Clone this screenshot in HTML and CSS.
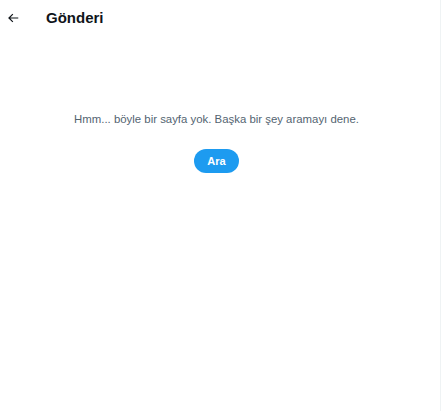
FILE: index.html
```html
<!DOCTYPE html>
<html lang="tr">
<head>
<meta charset="utf-8">
<link rel="stylesheet" href="styles.css">
</head>
<body>
<main class="column">
  <header class="topbar">
    <button class="back" aria-label="Geri">
      <svg viewBox="0 0 24 24" width="14" height="14"><path d="M7.414 13l5.043 5.04-1.414 1.42L3.586 12l7.457-7.46 1.414 1.42L7.414 11H21v2H7.414z" fill="#0f1419"/></svg>
    </button>
    <h1 class="title">Gönderi</h1>
  </header>
  <section class="empty">
    <p class="message">Hmm... böyle bir sayfa yok. Başka bir şey aramayı dene.</p>
    <button class="search-btn">Ara</button>
  </section>
</main>
</body>
</html>
```
FILE: styles.css
```css
html, body {
  margin: 0;
  padding: 0;
  background: #fff;
  height: 100%;
}
body {
  font-family: "Liberation Sans", Arial, sans-serif;
  color: #0f1419;
}
.column {
  width: 440px;
  min-height: 100%;
  border-right: 1px solid #eff3f4;
  box-sizing: content-box;
}
.topbar {
  display: flex;
  align-items: center;
  height: 35px;
  padding: 0 5px;
}
.back {
  width: 14px;
  height: 14px;
  padding: 0;
  margin: 0 0 0 1px;
  border: 0;
  background: none;
  display: flex;
}
.title {
  margin: 0 0 0 26px;
  font-size: 15px;
  font-weight: 700;
  line-height: 20px;
}
.empty {
  display: flex;
  flex-direction: column;
  align-items: center;
  padding-top: 76px;
  padding-right: 7px;
}
.message {
  margin: 0;
  font-size: 11.4px;
  line-height: 16px;
  color: #536471;
}
.search-btn {
  margin-top: 22px;
  width: 45px;
  height: 24px;
  border: 0;
  border-radius: 12px;
  background: #1d9bf0;
  color: #fff;
  font-family: inherit;
  font-size: 11px;
  font-weight: 700;
  padding: 0;
}
```
